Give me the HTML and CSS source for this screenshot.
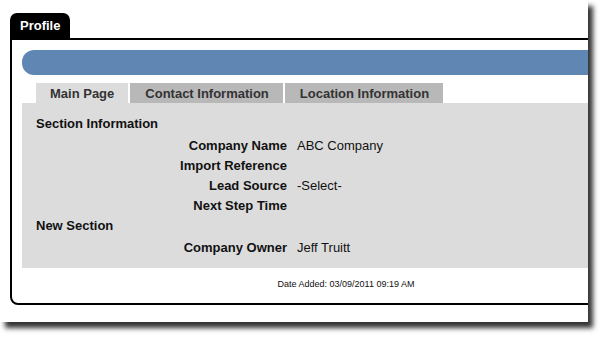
FILE: index.html
```html
<!DOCTYPE html>
<html lang="en">
<head>
    <meta charset="UTF-8">
    <title>Profile</title>
    <link rel="stylesheet" href="styles.css">
</head>
<body>
    <div class="frame">
        <div class="widget">
            <div class="widget-tab">Profile</div>
            <div class="widget-box">
                <div class="title-bar"></div>
                <div class="tabs">
                    <div class="tab active">Main Page</div>
                    <div class="tab">Contact Information</div>
                    <div class="tab">Location Information</div>
                </div>
                <div class="panel">
                    <div class="section-title">Section Information</div>
                    <div class="field"><span class="label">Company Name</span><span class="value">ABC Company</span></div>
                    <div class="field"><span class="label">Import Reference</span><span class="value"></span></div>
                    <div class="field"><span class="label">Lead Source</span><span class="value">-Select-</span></div>
                    <div class="field"><span class="label">Next Step Time</span><span class="value"></span></div>
                    <div class="section-title">New Section</div>
                    <div class="field"><span class="label">Company Owner</span><span class="value">Jeff Truitt</span></div>
                </div>
                <div class="footer">Date Added: 03/09/2011 09:19 AM</div>
            </div>
        </div>
    </div>
</body>
</html>
```

FILE: styles.css
```css
* {
    margin: 0;
    padding: 0;
    box-sizing: border-box;
}

html, body {
    background: #fff;
}

body {
    font-family: 'Liberation Sans', Arial, sans-serif;
    color: #111;
    width: 604px;
    height: 338px;
    overflow: hidden;
}

.frame {
    width: 588px;
    height: 322px;
    background: #fff;
    overflow: hidden;
    box-shadow: 5px 6px 5px rgba(0, 0, 0, 0.8);
}

.widget {
    padding: 13px 0 0 10px;
    width: 700px;
}

.widget-tab {
    display: inline-block;
    background: #000;
    color: #fff;
    font-weight: bold;
    font-size: 13px;
    height: 25px;
    line-height: 26px;
    padding: 0 10px;
    border-radius: 7px 7px 0 0;
    vertical-align: top;
}

.widget-box {
    width: 672px;
    border: 2px solid #000;
    border-radius: 0 0 8px 8px;
    padding: 10px 10px 0;
}

.title-bar {
    height: 25px;
    background: #6087b4;
    border-radius: 12px;
}

.tabs {
    display: flex;
    margin-top: 8px;
    padding-left: 14px;
    gap: 2px;
}

.tab {
    height: 20px;
    line-height: 21px;
    padding: 0 14px 0 15px;
    font-size: 13px;
    font-weight: bold;
    color: #333;
    background: #b8b8b8;
}

.tab.active {
    background: #dcdcdc;
    padding: 0 14px;
}

.panel {
    background: #dcdcdc;
    padding: 11px 14px 10px;
    font-size: 13px;
}

.section-title {
    font-weight: bold;
    line-height: 20px;
    margin-bottom: 2px;
}

.field {
    display: grid;
    grid-template-columns: 251px 1fr;
    column-gap: 10px;
    line-height: 20px;
}

.field .label {
    font-weight: bold;
    text-align: right;
}

.footer {
    height: 35px;
    padding-top: 10px;
    font-size: 9px;
    line-height: 12px;
    text-align: center;
    color: #111;
}
```
